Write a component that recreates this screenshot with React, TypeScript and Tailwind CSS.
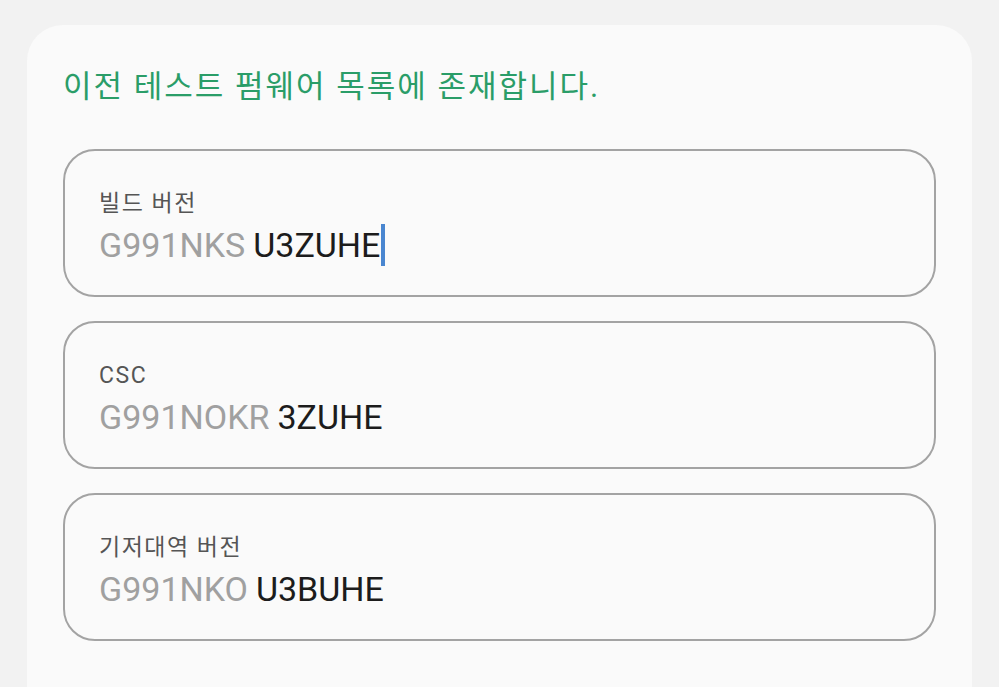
const fields = [
  { label: "빌드 버전", prefix: "G991NKS", value: "U3ZUHE", cursor: true },
  { label: "CSC", prefix: "G991NOKR", value: "3ZUHE", cursor: false },
  { label: "기저대역 버전", prefix: "G991NKO", value: "U3BUHE", cursor: false },
];

function Field({ label, prefix, value, cursor }: { label: string; prefix: string; value: string; cursor: boolean }) {
  return (
    <div className="flex h-[148px] flex-col justify-center rounded-[32px] border-2 border-[#a3a3a3] pl-[34px] pt-[10px]">
      <div className="text-[23px] leading-[28px] tracking-[1.5px] text-[#555555]">{label}</div>
      <div className="mt-[6px] flex items-center text-[34px] leading-[42px]">
        <span className="text-[#a0a0a0]">{prefix}</span>
        <span className="ml-[8px] text-[#1c1c1c]">{value}</span>
        {cursor && <span className="ml-[1px] h-[42px] w-[4px] bg-[#4a86d0]" />}
      </div>
    </div>
  );
}

export default function App() {
  return (
    <div
      className="h-[687px] overflow-hidden bg-[#f2f2f2] px-[27px] pt-[25px]"
      style={{ fontFamily: "Roboto, 'Noto Sans CJK KR', sans-serif" }}
    >
      <div className="h-[700px] rounded-[36px] bg-[#fafafa] px-[36px] pt-[42px]">
        <h1 className="text-[31px] leading-[40px] tracking-[2px] text-[#2a9d68]">이전 테스트 펌웨어 목록에 존재합니다.</h1>
        <div className="mt-[42px] flex flex-col gap-[24px]">
          {fields.map((f) => (
            <Field key={f.label} {...f} />
          ))}
        </div>
      </div>
    </div>
  );
}
